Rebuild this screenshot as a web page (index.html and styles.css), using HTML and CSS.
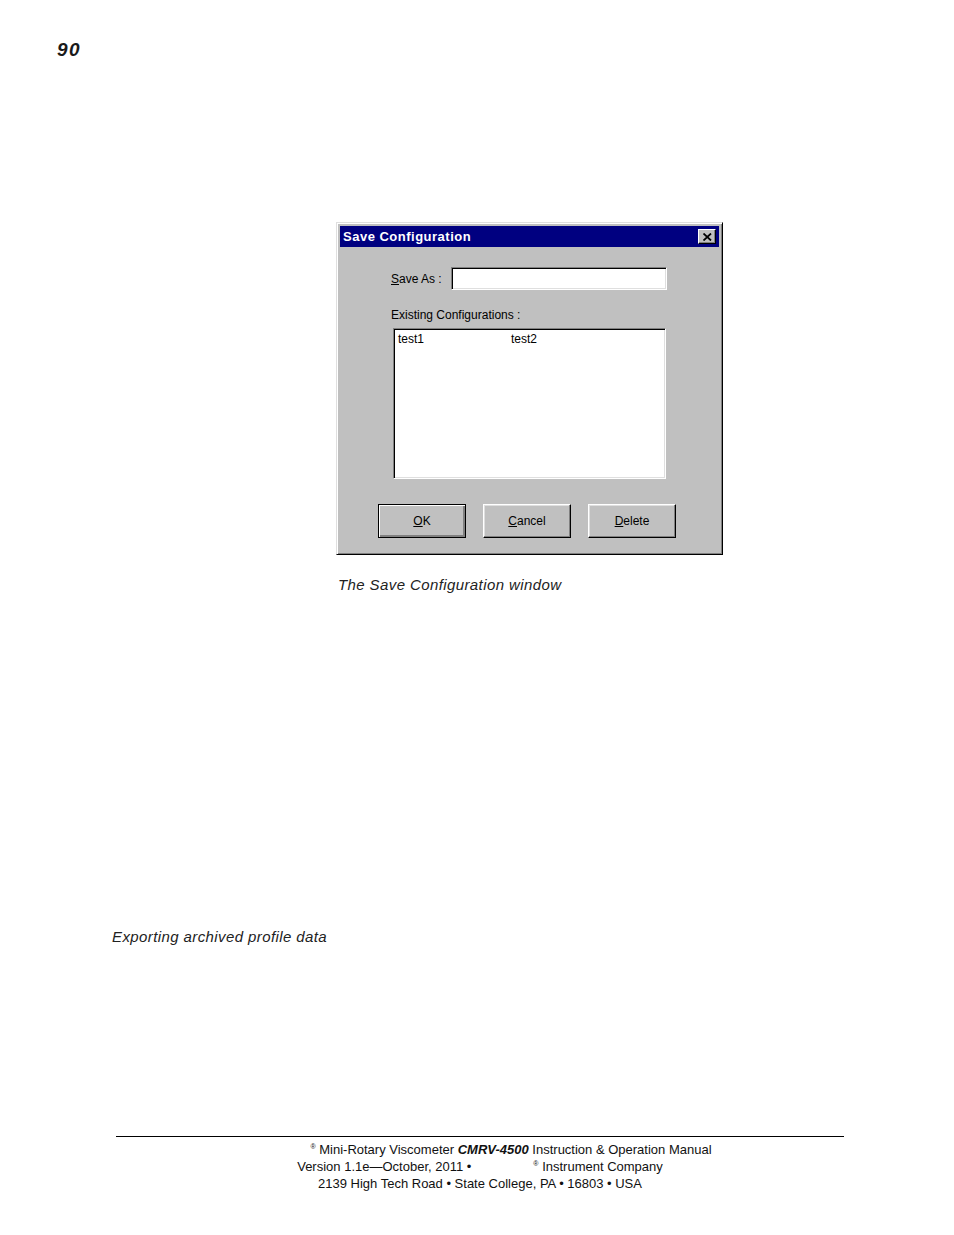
FILE: index.html
```html
<!DOCTYPE html>
<html>
<head>
<meta charset="utf-8">
<link rel="stylesheet" href="styles.css">
</head>
<body>
<div class="page">
  <div class="page-num">90</div>

  <div class="figure">
    <div class="dialog">
      <div class="titlebar">
        <span class="title">Save Configuration</span>
        <span class="close">
          <svg width="9" height="8" viewBox="0 0 9 8"><path d="M0.5 0.5 L8 7.5 M8 0.5 L0.5 7.5" stroke="#000" stroke-width="1.8" fill="none"/></svg>
        </span>
      </div>
      <div class="dlg-body">
        <div class="row-saveas">
          <span class="lbl"><u>S</u>ave As :</span>
          <div class="input"></div>
        </div>
        <div class="lbl existing">Existing Configurations :</div>
        <div class="listbox">
          <span class="item">test1</span><span class="item">test2</span>
        </div>
        <div class="buttons">
          <div class="btn default"><u>O</u>K</div>
          <div class="btn"><u>C</u>ancel</div>
          <div class="btn"><u>D</u>elete</div>
        </div>
      </div>
    </div>
    <div class="caption">The Save Configuration window</div>
  </div>

  <div class="caption export">Exporting archived profile data</div>

  <div class="footer">
    <div class="fline first"><sup>®</sup> Mini-Rotary Viscometer <b><i>CMRV-4500</i></b> Instruction &amp; Operation Manual</div>
    <div class="fline">Version 1.1e—October, 2011 •<span class="gap"></span><sup>®</sup> Instrument Company</div>
    <div class="fline">2139 High Tech Road • State College, PA • 16803 • USA</div>
  </div>
</div>
</body>
</html>
```

FILE: styles.css
```css
html, body {
  margin: 0;
  padding: 0;
  background: #fff;
}
body {
  font-family: "Liberation Sans", Arial, sans-serif;
  color: #111;
}
.page {
  width: 954px;
  height: 1235px;
}
.page-num {
  padding: 40px 0 0 57px;
  font-size: 19px;
  line-height: 20px;
  font-weight: bold;
  font-style: italic;
  letter-spacing: 1.5px;
  height: 20px;
  color: #1a1a1a;
}
.figure {
  margin: 162px 0 0 336px;
}
.dialog {
  background: #c0c0c0;
  border: 1px solid;
  border-color: #dfdfdf #000 #000 #dfdfdf;
  box-shadow: inset 1px 1px #fff, inset -1px -1px #808080;
  padding: 3px;
  box-sizing: border-box;
  width: 387px;
  height: 333px;
}
.titlebar {
  height: 21px;
  background: #000080;
  display: flex;
  align-items: center;
  justify-content: space-between;
  padding: 0 3px 0 3px;
}
.title {
  color: #fff;
  font-weight: bold;
  font-size: 13px;
  letter-spacing: 0.5px;
}
.close {
  width: 18px;
  height: 15px;
  box-sizing: border-box;
  background: #c0c0c0;
  border: 1px solid;
  border-color: #fff #000 #000 #fff;
  box-shadow: inset -1px -1px #808080;
  display: flex;
  align-items: center;
  justify-content: center;
}
.dlg-body {
  padding: 20px 0 0 51px;
}
.lbl {
  font-size: 12px;
  line-height: 14px;
  color: #000;
}
.row-saveas {
  display: flex;
  align-items: center;
  gap: 6px;
}
.row-saveas .lbl {
  width: 54px;
}
.input {
  width: 216px;
  height: 23px;
  box-sizing: border-box;
  background: #fff;
  border: 1px solid;
  border-color: #808080 #fff #fff #808080;
  box-shadow: inset 1px 1px #000, inset -1px -1px #dfdfdf;
}
.existing {
  margin-top: 18px;
}
.listbox {
  margin: 6px 0 0 2px;
  width: 273px;
  height: 151px;
  box-sizing: border-box;
  background: #fff;
  border: 1px solid;
  border-color: #808080 #fff #fff #808080;
  box-shadow: inset 1px 1px #000, inset -1px -1px #dfdfdf;
  padding: 3px 0 0 4px;
  font-size: 12px;
  line-height: 14px;
  color: #000;
  display: flex;
}
.item {
  width: 113px;
}
.buttons {
  display: flex;
  gap: 17px;
  margin: 25px 0 0 -13px;
}
.btn {
  width: 88px;
  height: 34px;
  box-sizing: border-box;
  border: 1px solid;
  border-color: #fff #000 #000 #fff;
  box-shadow: inset -1px -1px #808080, inset 1px 1px #dfdfdf;
  display: flex;
  align-items: center;
  justify-content: center;
  font-size: 12px;
  color: #000;
}
.btn.default {
  border: 1px solid #000;
  box-shadow: inset 1px 1px #fff, inset -2px -2px #808080, inset -1px -1px #000;
}
.caption {
  margin-top: 21px;
  margin-left: 2px;
  font-size: 15px;
  line-height: 17px;
  letter-spacing: 0.4px;
  font-style: italic;
  color: #222;
}
.export {
  margin: 335px 0 0 112px;
}
.footer {
  margin: 191px 0 0 116px;
  width: 728px;
  border-top: 1px solid #000;
  padding-top: 4px;
  text-align: center;
  font-size: 13px;
  line-height: 17px;
  color: #111;
}
.fline.first {
  padding-left: 62px;
}
.fline sup {
  font-size: 7px;
  vertical-align: 5px;
  line-height: 0;
}
.gap {
  display: inline-block;
  width: 62px;
}
```
